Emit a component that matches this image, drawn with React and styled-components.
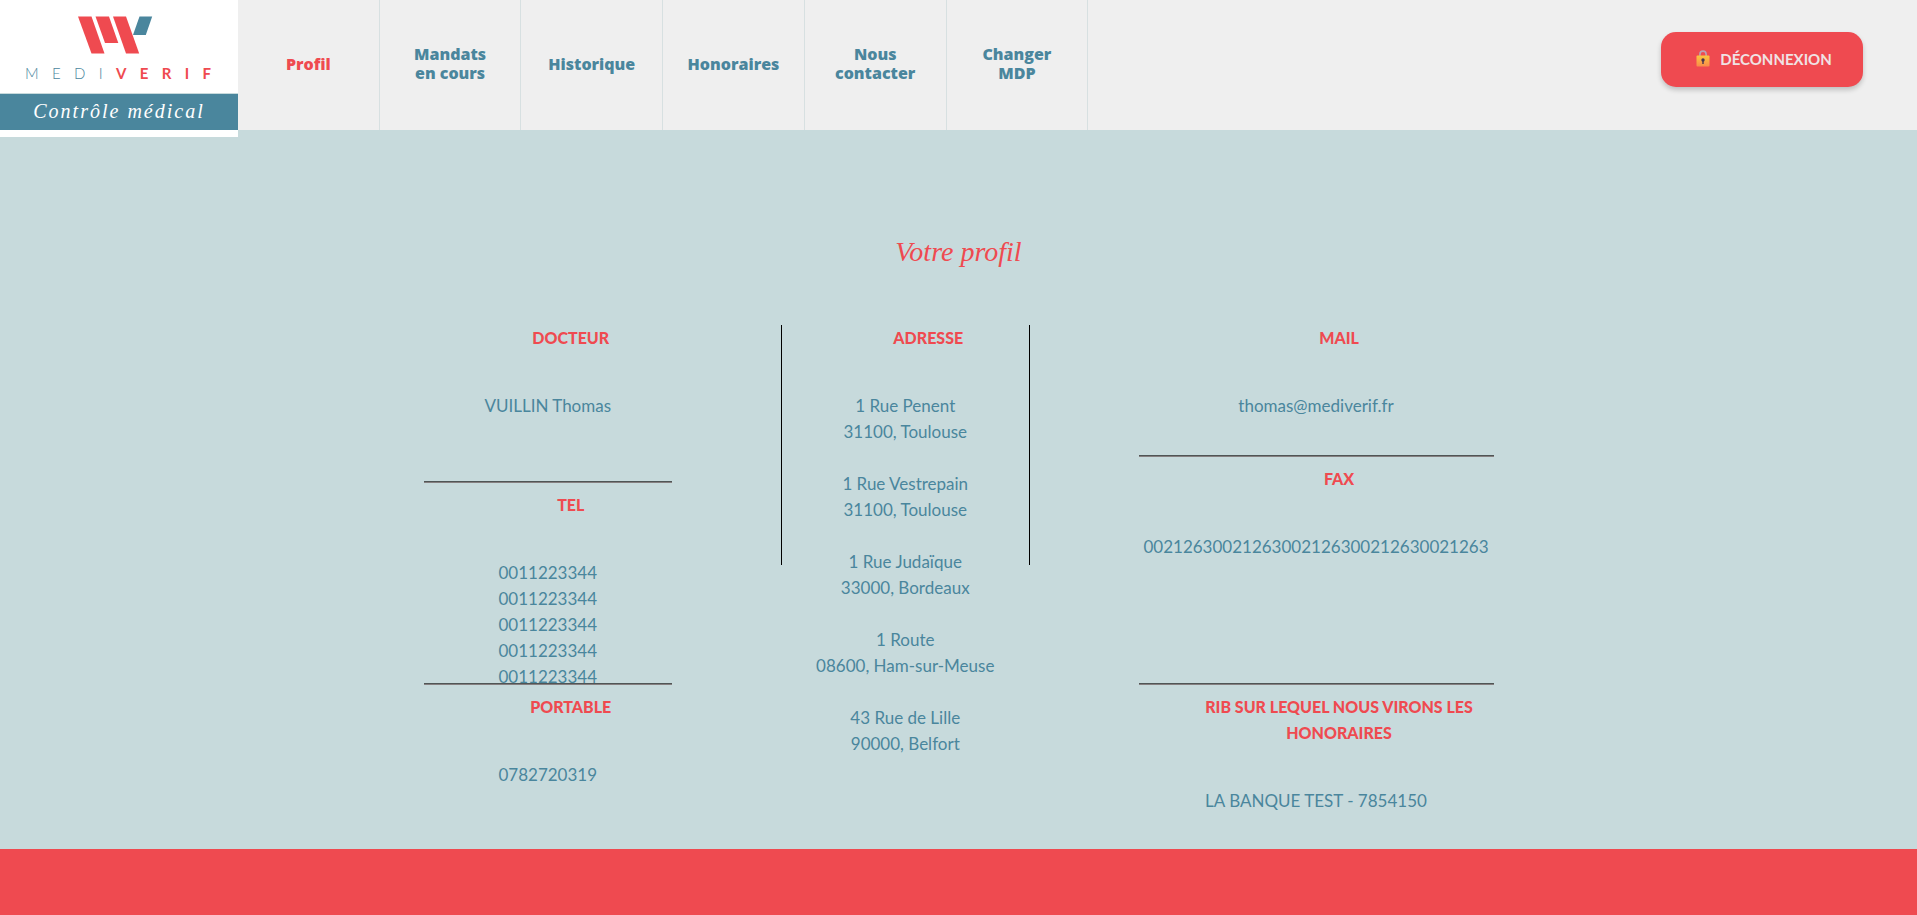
import React from "react";
import styled, { createGlobalStyle } from "styled-components";

const red = "#ef4a50";
const teal = "#4a869d";
const mist = "#c7dadc";
const sans = `Lato, "Liberation Sans", sans-serif`;
const heavy = `"Open Sans", "Liberation Sans", sans-serif`;
const serif = `"Liberation Serif", serif`;

const GlobalStyle = createGlobalStyle`
  *, *::before, *::after { box-sizing: border-box; }
  body { margin: 0; background: ${mist}; font-family: ${sans}; }
  h1, h2, p { margin: 0; }
`;

const Page = styled.div`
  display: flex;
  flex-direction: column;
  min-height: 100vh;
`;

const Header = styled.header`
  display: flex;
  align-items: flex-start;
  height: 130px;
  background: #efefef;
`;

const Brand = styled.a`
  display: flex;
  flex-direction: column;
  flex: none;
  width: 238px;
  height: 137px;
  padding-top: 16px;
  background: #fff;
  text-align: center;
  text-decoration: none;
`;

const Emblem = styled.svg`
  display: block;
  width: 76px;
  height: 38px;
  margin-left: 77px;
`;

const Wordmark = styled.span`
  display: flex;
  justify-content: space-between;
  margin: 9px 27px 0 25px;
  height: 20px;
  font-size: 15px;
  line-height: 20px;
  font-weight: 300;
  color: ${teal};

  b {
    font-weight: 700;
    color: ${red};
  }
`;

const Tagline = styled.span`
  height: 37px;
  margin-top: 10px;
  border-top: 1px solid ${mist};
  background: ${teal};
  color: #fff;
  font-family: ${serif};
  font-style: italic;
  font-size: 20px;
  line-height: 35px;
  letter-spacing: 2px;
`;

const Nav = styled.nav`
  display: flex;
  flex: 1;
  height: 100%;
`;

const NavLink = styled.a`
  display: flex;
  align-items: center;
  justify-content: center;
  width: 8.44%;
  padding: 0 20px 2px;
  border-right: 1px solid #d7e0e1;
  color: ${(p) => (p.$active ? red : teal)};
  font-family: ${heavy};
  font-size: 16px;
  line-height: 19px;
  font-weight: 800;
  text-align: center;
  text-decoration: none;
`;

const LogoutButton = styled.button`
  display: flex;
  align-items: center;
  justify-content: center;
  gap: 10px;
  width: 202px;
  height: 55px;
  margin: 32px 54px 0 auto;
  padding: 0 0 2px 4px;
  border: 0;
  border-radius: 15px;
  background: ${red};
  box-shadow: 0 3px 5px rgba(0, 0, 0, 0.2);
  color: #efe3e4;
  font-family: ${sans};
  font-size: 15px;
  font-weight: 700;
  cursor: pointer;
`;

const Main = styled.main`
  padding: 100px 24px 35px;
`;

const Title = styled.h1`
  color: ${red};
  font-family: ${serif};
  font-style: italic;
  font-weight: 400;
  font-size: 28px;
  line-height: 44px;
  text-align: center;
`;

const Profile = styled.div`
  display: grid;
  grid-template-columns: 7fr 7fr 10fr;
  column-gap: 109px;
  max-width: 1070px;
  margin: 51px auto 0;
`;

const Column = styled.div`
  min-width: 0;
`;

const RuledColumn = styled(Column)`
  height: 240px;
  border: solid #000;
  border-width: 0 1px;
`;

const Block = styled.section`
  height: ${(p) => (p.$height ? `${p.$height}px` : "auto")};
  text-align: center;
`;

const Label = styled.h2`
  padding-left: 46px;
  color: ${red};
  font-size: 16px;
  line-height: 26px;
  font-weight: 900;
`;

const Values = styled.div`
  margin-top: 42px;
  color: ${teal};
  font-size: 17px;
  line-height: 26px;
  white-space: nowrap;
`;

const Address = styled.p`
  & + & {
    margin-top: 26px;
  }
`;

const Rule = styled.hr`
  position: relative;
  height: 2px;
  margin: 0 0 9px;
  border: 0;
  border-top: 1px solid #4f5555;
  background: #857f80;
`;

const Footer = styled.footer`
  flex: 1;
  min-height: 66px;
  background: ${red};
`;

const LINKS = [
  ["Profil"],
  ["Mandats", "en cours"],
  ["Historique"],
  ["Honoraires"],
  ["Nous", "contacter"],
  ["Changer", "MDP"],
];

const PHONES = ["0011223344", "0011223344", "0011223344", "0011223344", "0011223344"];

const ADDRESSES = [
  ["1 Rue Penent", "31100, Toulouse"],
  ["1 Rue Vestrepain", "31100, Toulouse"],
  ["1 Rue Judaïque", "33000, Bordeaux"],
  ["1 Route", "08600, Ham-sur-Meuse"],
  ["43 Rue de Lille", "90000, Belfort"],
];

function Lines({ items }) {
  return items.map((item, i) => (
    <React.Fragment key={i}>
      {i > 0 && <br />}
      {item}
    </React.Fragment>
  ));
}

function Field({ label, height, children }) {
  return (
    <Block $height={height}>
      <Label>{label}</Label>
      <Values>{children}</Values>
    </Block>
  );
}

function LockIcon() {
  return (
    <svg width="14" height="17" viewBox="0 0 14 17" aria-hidden="true">
      <defs>
        <linearGradient id="lockBody" x1="0" y1="0" x2="0" y2="1">
          <stop offset="0" stopColor="#fbc63f" />
          <stop offset="1" stopColor="#f98a4b" />
        </linearGradient>
      </defs>
      <path d="M3.9 7V4.2a3.1 3.1 0 0 1 6.2 0V7" fill="none" stroke="#b9a3b4" strokeWidth="1.6" />
      <rect x="0.5" y="5.6" width="13" height="11" rx="1" fill="url(#lockBody)" />
      <circle cx="7" cy="10" r="1.7" fill="#48334f" />
      <path d="M6.3 10h1.4v4H6.3z" fill="#48334f" />
    </svg>
  );
}

export default function App() {
  return (
    <Page>
      <GlobalStyle />
      <Header>
        <Brand href="#">
          <Emblem viewBox="0 0 76 38" aria-hidden="true">
            <path d="M1 .5h13.500l13 37H14.500z" fill={red} />
            <path d="M18.500 .5h13.500l9.300 26.500H28z" fill={red} />
            <path d="M36 .5h13l13.200 37H49z" fill={red} />
            <path d="M62.500 .5H75.200L68.800 19H56z" fill="#4a869d" />
          </Emblem>
          <Wordmark>
            <span>M</span>
            <span>E</span>
            <span>D</span>
            <span>I</span>
            <b>V</b>
            <b>E</b>
            <b>R</b>
            <b>I</b>
            <b>F</b>
          </Wordmark>
          <Tagline>Contrôle médical</Tagline>
        </Brand>
        <Nav>
          {LINKS.map((lines, i) => (
            <NavLink href="#" key={lines[0]} $active={i === 0}>
              <span>
                <Lines items={lines} />
              </span>
            </NavLink>
          ))}
          <LogoutButton type="button">
            <LockIcon />
            DÉCONNEXION
          </LogoutButton>
        </Nav>
      </Header>

      <Main>
        <Title>Votre profil</Title>
        <Profile>
          <Column>
            <Field label="DOCTEUR" height={156}>VUILLIN Thomas</Field>
            <Rule />
            <Field label="TEL" height={191}>
              <Lines items={PHONES} />
            </Field>
            <Rule />
            <Field label="PORTABLE">0782720319</Field>
          </Column>
          <RuledColumn>
            <Field label="ADRESSE">
              {ADDRESSES.map((lines) => (
                <Address key={lines[0]}>
                  <Lines items={lines} />
                </Address>
              ))}
            </Field>
          </RuledColumn>
          <Column>
            <Field label="MAIL" height={130}>thomas@mediverif.fr</Field>
            <Rule />
            <Field label="FAX" height={217}>00212630021263002126300212630021263</Field>
            <Rule />
            <Field label="RIB SUR LEQUEL NOUS VIRONS LES HONORAIRES">LA BANQUE TEST - 7854150</Field>
          </Column>
        </Profile>
      </Main>
      <Footer />
    </Page>
  );
}
